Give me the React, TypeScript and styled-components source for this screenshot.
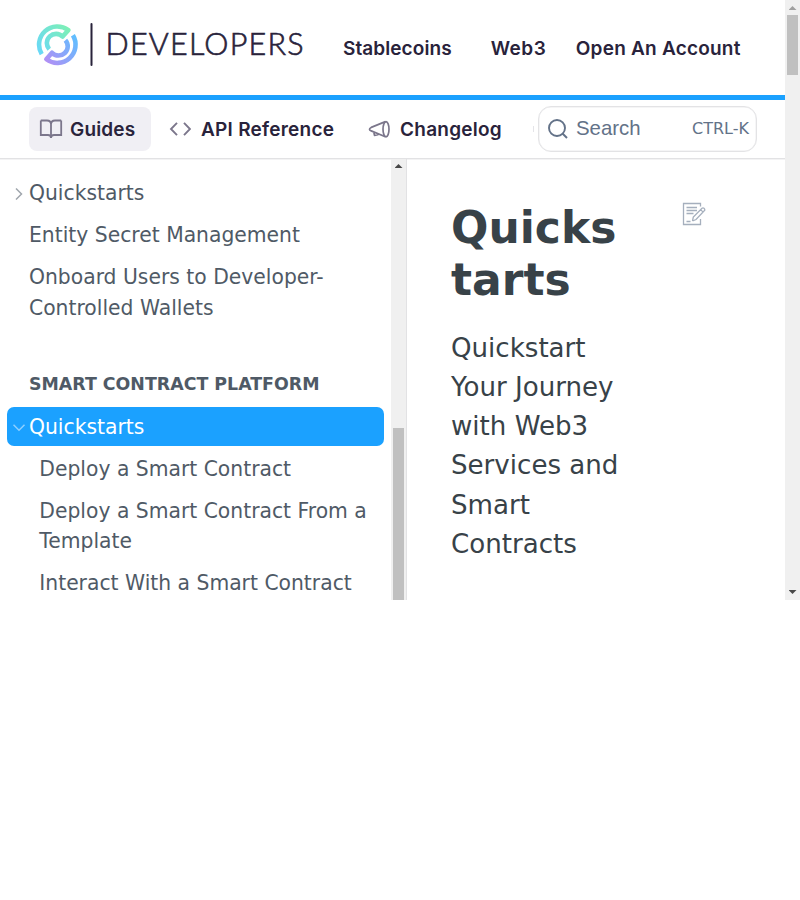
import React from 'react';
import styled, { createGlobalStyle } from 'styled-components';

const Global = createGlobalStyle`
  *, *::before, *::after { box-sizing: border-box; }
  body { margin: 0; background: #fff; }
  h1, h2, p { margin: 0; }
`;

const Viewport = styled.div`
  display: flex;
  width: 800px;
  height: 600px;
  overflow: hidden;
  font-family: 'DejaVu Sans', sans-serif;
  color: #4f5a66;
`;

const Page = styled.div`
  display: flex;
  flex-direction: column;
  width: 785px;
  height: 600px;
`;

const TopBar = styled.header`
  display: flex;
  align-items: flex-start;
  height: 100px;
  padding: 20px 0 0 36px;
  border-bottom: 5px solid #1ba1ff;
`;

const TopLinks = styled.nav`
  display: flex;
  padding-top: 17px;
  margin-left: 39px;
`;

const NavText = styled.span<{ $spacing?: number; $gap?: number }>`
  font: 600 19px/24px Inter, sans-serif;
  letter-spacing: ${p => p.$spacing ?? 0.25}px;
  margin-left: ${p => p.$gap ?? 0}px;
  color: #29233b;
  white-space: nowrap;
`;

const SubBar = styled.div`
  display: flex;
  height: 59px;
  flex: none;
  padding: 6px 28px 0 29px;
  border-bottom: 1px solid #e2e2e4;
  box-shadow: 0 1px 0 #f3f3f4;
`;

const Tab = styled.div<{ $active?: boolean; $width: number }>`
  display: flex;
  flex: none;
  align-items: center;
  width: ${p => p.$width}px;
  height: 44px;
  margin-top: 1px;
  padding-left: 10px;
  border-radius: 8px;
  background: ${p => (p.$active ? '#f0eff4' : 'transparent')};
  svg { flex: none; }
  span { padding-top: 1px; }
`;

const NavGap = styled.span`
  flex: none;
  width: 8px;
`;

const OverflowHint = styled.span`
  width: 1px;
  height: 6px;
  margin: 20px 4px 0 auto;
  background: #e4e4e8;
`;

const SearchBox = styled.div`
  display: flex;
  flex: none;
  align-items: center;
  width: 219px;
  height: 46px;
  padding: 0 7px 1px 8.5px;
  border: 1px solid #e3e3e5;
  border-radius: 13px;
  box-shadow: inset 0 0 0 0.5px #ececee;
  color: #637288;
`;

const SearchLabel = styled.span`
  margin: -2px 0 0 8.5px;
  font: 20.4px/24px 'Liberation Sans', sans-serif;
`;

const Shortcut = styled.span`
  margin-left: auto;
  font-size: 16px;
`;

const Body = styled.div`
  display: flex;
  flex: 1;
  min-height: 0;
`;

const Sidebar = styled.aside`
  width: 391px;
  height: 441px;
  padding: 15px 7px 0;
  overflow: hidden;
`;

const Entry = styled.div<{ $active?: boolean; $child?: boolean }>`
  display: flex;
  padding: 4.3px 8px 4.3px ${p => (p.$child ? 32.3 : 6)}px;
  margin-bottom: 3px;
  border-radius: 7px;
  font-size: 20.32px;
  line-height: 30.4px;
  color: ${p => (p.$active ? '#fff' : '#4f5a66')};
  background: ${p => (p.$active ? '#1ba1ff' : 'transparent')};
`;

const Marker = styled.span`
  display: flex;
  flex: none;
  align-items: center;
  width: 16px;
  height: 30.4px;
  padding-top: 1px;
`;

const Category = styled.h2`
  margin: 43px 0 8px 22px;
  font-size: 17.4px;
  line-height: 29px;
  font-weight: 700;
`;

const Track = styled.div`
  display: flex;
  flex: none;
  flex-direction: column;
  align-items: center;
  width: 15px;
  background: #f0f0f0;
`;

const Thumb = styled.div<{ $start?: number; $size: number }>`
  flex: none;
  width: 11px;
  height: ${p => p.$size}px;
  margin-top: ${p => p.$start ?? 0}px;
  background: #c0c0c0;
`;

const Arrow = styled.div<{ $down?: boolean; $muted?: boolean }>`
  flex: none;
  width: 8px;
  height: 4px;
  margin: ${p => (p.$down ? 'auto 0 6px' : p.$muted ? '6px 0 5px' : '5px 0 6px')};
  background: ${p => (p.$muted ? '#a0a0a0' : '#484848')};
  clip-path: ${p => (p.$down ? 'polygon(0 0, 100% 0, 50% 100%)' : 'polygon(50% 0, 100% 100%, 0 100%)')};
`;

const Article = styled.main`
  display: flex;
  flex: 1;
  padding: 43px 0 0 44px;
  border-left: 1px solid #e2e2e4;
  color: #384248;
`;

const Copy = styled.div`
  width: 170px;
  margin-right: 61px;
`;

const Title = styled.h1`
  font-size: 44px;
  line-height: 52px;
  word-break: break-all;
`;

const Lead = styled.p`
  margin-top: 22.8px;
  font-size: 26.1px;
  line-height: 39.2px;
`;

const Logo = () => (
  <svg width="268" height="50" viewBox="0 0 268 50" fill="none">
    <defs>
      <linearGradient id="mint" x1="2" y1="34" x2="35" y2="8" gradientUnits="userSpaceOnUse">
        <stop stopColor="#68d7fa" />
        <stop offset="1" stopColor="#7ef1b3" />
      </linearGradient>
      <linearGradient id="violet" x1="12" y1="43" x2="41" y2="18" gradientUnits="userSpaceOnUse">
        <stop stopColor="#b090f5" />
        <stop offset="1" stopColor="#5fbfff" />
      </linearGradient>
    </defs>
    <g strokeWidth="4.6" strokeLinejoin="round">
      <path d="M5.7 34.1A18.2 18.2 0 0 1 32.25 10.16L26.6 16.6A9.2 9.2 0 0 0 13.2 29.2" stroke="url(#mint)" />
      <path d="M36.9 15.3A18.2 18.2 0 0 1 10.35 39.24L16 32.8A9.2 9.2 0 0 0 29.4 20.2" stroke="url(#violet)" />
    </g>
    <path d="M55.5 4v41" stroke="#29233b" strokeWidth="2" strokeLinecap="round" />
    <text x="69.5" y="35" textLength="198" fontFamily="Lato" fontSize="30.5" fontWeight="300" fill="#29233b" stroke="#29233b" strokeWidth=".65">DEVELOPERS</text>
  </svg>
);

const BookIcon = () => (
  <svg width="24" height="22" viewBox="0 0 24 22" fill="none" stroke="#7b768b" strokeWidth="1.8">
    <path d="M1.8 2.5H8Q12 2.5 12 6.3V20M22.2 2.5H16Q12 2.5 12 6.3M1.8 2.5V17H9Q12 17 12 20Q12 17 15 17H22.2V2.5" />
  </svg>
);

const CodeIcon = () => (
  <svg width="22" height="16" viewBox="0 0 22 16" fill="none" stroke="#7b768b" strokeWidth="1.9">
    <path d="M8 1.8 2 8l6 6.2M15 1.8l6 6.2-6 6.2" />
  </svg>
);

const HornIcon = () => (
  <svg width="22" height="20" viewBox="0 0 22 20" fill="none" stroke="#7b768b" strokeWidth="1.7" strokeLinejoin="round">
    <ellipse cx="18" cy="10.2" rx="3" ry="7.6" />
    <path d="M17.4 2.6 3.2 8.4Q1.5 9.2 1.5 10.3t1.7 1.6L17.4 17.8M5.7 12.9l.8 3.4 3.3-.6.3-1" />
  </svg>
);

const SearchIcon = () => (
  <svg width="20" height="20" viewBox="0 0 20 20" fill="none" stroke="#637288" strokeWidth="1.9">
    <circle cx="9" cy="9" r="8" />
    <path d="m14.5 14.5 4.5 4.5" />
  </svg>
);

const Chevron = ({ open }: { open?: boolean }) => (
  <svg width="13" height="13" viewBox="0 0 13 13" fill="none" stroke={open ? '#8fd0ff' : '#a0a6ad'} strokeWidth="1.5">
    <path d={open ? 'M.5 3.8 6 9.3l5.5-5.5' : 'M3 1.5 8.5 7 3 12.5'} />
  </svg>
);

const EditIcon = () => (
  <svg width="24" height="24" viewBox="0 0 24 24" fill="none" stroke="#a5afbd" strokeWidth="1.3">
    <path d="M18.5 4.5V1.5H1.5v21h17V17M4.5 5.5h10.5M4.5 8.5h10.5M4.5 11.5h7M4.5 19.5h4" />
    <path d="m10.5 19 .8-4L20 6.2q1-.8 2 0t.8 2L14 17.5l-3.5 1.5M18.6 7.6l2.8 2.8" fill="#fff" />
  </svg>
);

export default function App() {
  return (
    <>
      <Global />
      <Viewport>
        <Page>
          <TopBar>
            <Logo />
            <TopLinks>
              <NavText $spacing={0.08}>Stablecoins</NavText>
              <NavText $gap={39} $spacing={0.5}>Web3</NavText>
              <NavText $gap={29.5} $spacing={0.22}>Open An Account</NavText>
            </TopLinks>
          </TopBar>
          <SubBar>
            <Tab $active $width={122}><BookIcon /><NavText $gap={7} $spacing={0.15}>Guides</NavText></Tab>
            <NavGap />
            <Tab $width={199}><CodeIcon /><NavText $gap={10}>API Reference</NavText></Tab>
            <Tab $width={150}><HornIcon /><NavText $gap={10}>Changelog</NavText></Tab>
            <OverflowHint />
            <SearchBox><SearchIcon /><SearchLabel>Search</SearchLabel><Shortcut>CTRL-K</Shortcut></SearchBox>
          </SubBar>
          <Body>
            <Sidebar>
              <Entry><Marker><Chevron /></Marker>Quickstarts</Entry>
              <Entry><Marker />Entity Secret Management</Entry>
              <Entry><Marker />Onboard Users to Developer-Controlled Wallets</Entry>
              <Category>SMART CONTRACT PLATFORM</Category>
              <Entry $active><Marker><Chevron open /></Marker>Quickstarts</Entry>
              <Entry $child>Deploy a Smart Contract</Entry>
              <Entry $child>Deploy a Smart Contract From a Template</Entry>
              <Entry $child>Interact With a Smart Contract</Entry>
            </Sidebar>
            <Track>
              <Arrow />
              <Thumb $start={254} $size={172} />
            </Track>
            <Article>
              <Copy>
                <Title>Quickstarts</Title>
                <Lead>Quickstart Your Journey with Web3 Services and Smart Contracts</Lead>
              </Copy>
              <EditIcon />
            </Article>
          </Body>
        </Page>
        <Track>
          <Arrow $muted />
          <Thumb $size={60} />
          <Arrow $down />
        </Track>
      </Viewport>
    </>
  );
}
